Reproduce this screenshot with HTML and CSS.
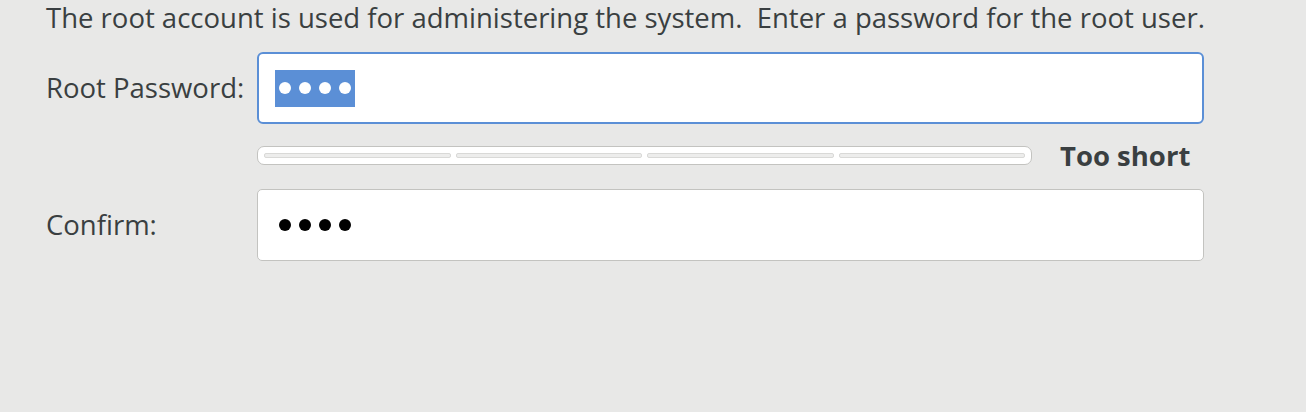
FILE: index.html
```html
<!DOCTYPE html>
<html lang="en">
<head>
    <meta charset="UTF-8">
    <meta name="viewport" content="width=device-width, initial-scale=1.0">
    <title>Root Password</title>
    <link rel="stylesheet" href="styles.css">
</head>
<body>
    <div class="spoke">
        <p class="intro">The root account is used for administering the system.&nbsp; Enter a password for the root user.</p>
        <div class="row">
            <label class="label">Root Password:</label>
            <div class="entry focused">
                <span class="selection">
                    <span class="dot"></span><span class="dot"></span><span class="dot"></span><span class="dot"></span>
                </span>
            </div>
        </div>
        <div class="row strength-row">
            <div class="strength">
                <div class="segment"></div>
                <div class="segment"></div>
                <div class="segment"></div>
                <div class="segment"></div>
            </div>
            <span class="strength-label">Too short</span>
        </div>
        <div class="row">
            <label class="label">Confirm:</label>
            <div class="entry">
                <span class="plain">
                    <span class="dot"></span><span class="dot"></span><span class="dot"></span><span class="dot"></span>
                </span>
            </div>
        </div>
    </div>
</body>
</html>
```

FILE: styles.css
```css
body {
    margin: 0;
    background-color: #e8e8e7;
    font-family: "Open Sans", "Noto Sans", sans-serif;
    font-size: 27.5px;
    line-height: 34px;
    color: #3a3f41;
}

.spoke {
    padding: 0 0 0 46px;
}

.intro {
    box-sizing: border-box;
    margin: 0;
    padding-top: 1px;
    height: 52px;
}

.row {
    display: flex;
    align-items: center;
}

.label {
    width: 211px;
    flex-shrink: 0;
}

.entry {
    box-sizing: border-box;
    width: 947px;
    height: 72px;
    background-color: #fff;
    border: 1px solid #c3c3c0;
    border-radius: 5px;
    display: flex;
    align-items: center;
    padding-left: 17px;
}

.entry.focused {
    border: 2px solid #5b8fd6;
    border-radius: 6px;
    padding-left: 16px;
}

.selection,
.plain {
    display: flex;
    align-items: center;
    gap: 8px;
    height: 37px;
    padding: 0 4px 0 4px;
}

.selection {
    background-color: #5b8fd6;
}

.dot {
    width: 12px;
    height: 12px;
    border-radius: 50%;
    background-color: #000;
}

.selection .dot {
    background-color: #fff;
}

.strength-row {
    height: 19px;
    margin: 22px 0 24px 211px;
}

.strength {
    box-sizing: border-box;
    width: 775px;
    height: 19px;
    background-color: #fff;
    border: 1px solid #c3c3c0;
    border-radius: 7px;
    display: flex;
    align-items: center;
    gap: 5px;
    padding: 0 6px;
}

.segment {
    flex: 1;
    height: 5px;
    box-sizing: border-box;
    border: 1px solid #d9d9d7;
    background-color: #ededec;
    border-radius: 2px;
}

.strength-label {
    margin-left: 28px;
    font-weight: bold;
}
```
